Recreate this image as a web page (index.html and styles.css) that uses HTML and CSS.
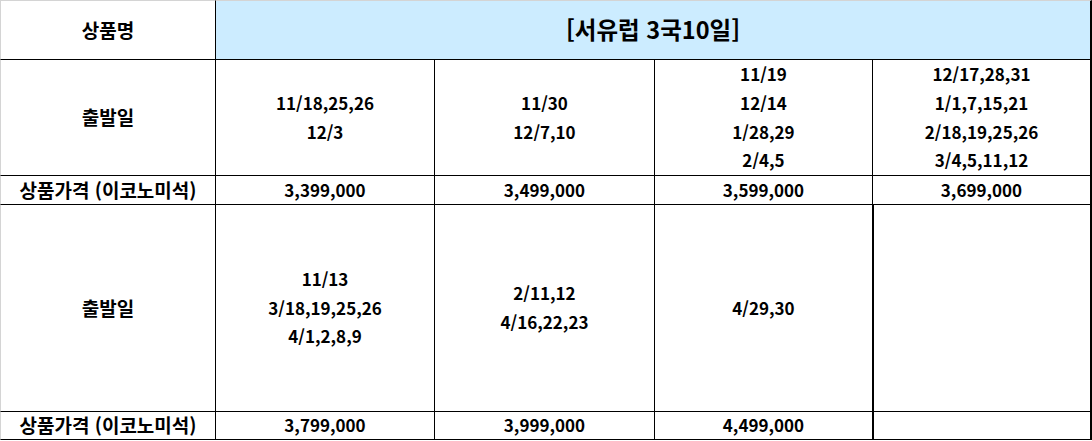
FILE: index.html
```html
<!DOCTYPE html>
<html lang="ko">
<head>
<meta charset="utf-8">
<title>서유럽 3국10일</title>
<link rel="stylesheet" href="styles.css">
</head>
<body>
<div class="sheet">
  <div class="cell label first top">상품명</div>
  <div class="cell title top span4">[서유럽 3국10일]</div>

  <div class="cell label first row-dates">출발일</div>
  <div class="cell">11/18,25,26<br>12/3</div>
  <div class="cell">11/30<br>12/7,10</div>
  <div class="cell">11/19<br>12/14<br>1/28,29<br>2/4,5</div>
  <div class="cell last">12/17,28,31<br>1/1,7,15,21<br>2/18,19,25,26<br>3/4,5,11,12</div>

  <div class="cell label first">상품가격 (이코노미석)</div>
  <div class="cell">3,399,000</div>
  <div class="cell">3,499,000</div>
  <div class="cell">3,599,000</div>
  <div class="cell last">3,699,000</div>

  <div class="cell label first">출발일</div>
  <div class="cell">11/13<br>3/18,19,25,26<br>4/1,2,8,9</div>
  <div class="cell">2/11,12<br>4/16,22,23</div>
  <div class="cell">4/29,30</div>
  <div class="cell last thick-left"></div>

  <div class="cell label first">상품가격 (이코노미석)</div>
  <div class="cell">3,799,000</div>
  <div class="cell">3,999,000</div>
  <div class="cell">4,499,000</div>
  <div class="cell last thick-left"></div>
</div>
</body>
</html>
```

FILE: styles.css
```css
html, body {
  margin: 0;
  padding: 0;
  background: #ffffff;
}

body {
  font-family: "Noto Sans CJK KR", "Noto Sans", sans-serif;
  font-weight: 700;
  color: #000000;
}

.sheet {
  display: grid;
  grid-template-columns: 216px 219px 220px 218px 219px;
  grid-template-rows: 60px 116px 29px 207px 28px;
  width: 1092px;
}

.cell {
  box-sizing: border-box;
  display: flex;
  align-items: center;
  justify-content: center;
  text-align: center;
  border-right: 1px solid #000000;
  border-bottom: 1px solid #000000;
  font-size: 17px;
  line-height: 28.7px;
  white-space: nowrap;
  overflow: visible;
}

.label {
  font-size: 19px;
}

.first {
  border-left: 1px solid #d4d4d4;
}

.top {
  border-top: 1px solid #d4d4d4;
}

.span4 {
  grid-column: span 4;
}

.title {
  background: #ccecff;
  font-size: 23.5px;
  border-right: 2px solid #000000;
  padding-bottom: 1px;
}

.last {
  border-right: 2px solid #000000;
}

.thick-left {
  border-left: 1px solid #000000;
}
```
